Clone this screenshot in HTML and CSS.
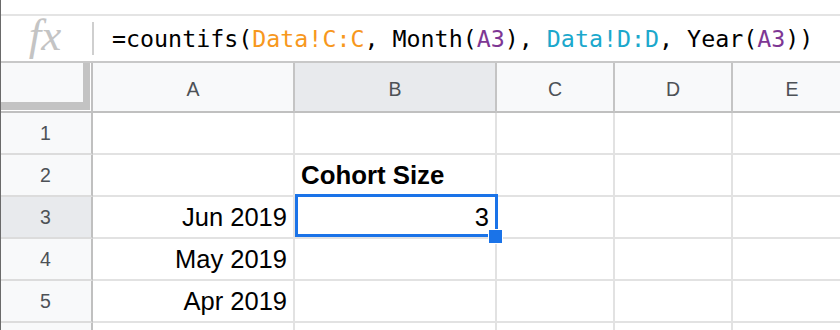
FILE: index.html
```html
<!DOCTYPE html>
<html>
<head>
<meta charset="utf-8">
<link rel="stylesheet" href="styles.css">
</head>
<body>
<div class="app">
  <div class="topgap"></div>
  <div class="formula-bar">
    <div class="fx">fx</div>
    <div class="sep"></div>
    <div class="formula">=countifs(<span class="r1">Data!C:C</span>, Month(<span class="r2">A3</span>), <span class="r3">Data!D:D</span>, Year(<span class="r2">A3</span>))</div>
  </div>
  <div class="grid">
    <div class="corner"></div>
    <div class="colh">A</div>
    <div class="colh sel-h">B</div>
    <div class="colh">C</div>
    <div class="colh">D</div>
    <div class="colh">E</div>

    <div class="rowh">1</div>
    <div class="cell"></div>
    <div class="cell"></div>
    <div class="cell"></div>
    <div class="cell"></div>
    <div class="cell"></div>

    <div class="rowh">2</div>
    <div class="cell"></div>
    <div class="cell bold">Cohort Size</div>
    <div class="cell"></div>
    <div class="cell"></div>
    <div class="cell"></div>

    <div class="rowh sel-h">3</div>
    <div class="cell num">Jun 2019</div>
    <div class="cell num active">3<span class="selbox"></span><span class="handle"></span></div>
    <div class="cell"></div>
    <div class="cell"></div>
    <div class="cell"></div>

    <div class="rowh">4</div>
    <div class="cell num">May 2019</div>
    <div class="cell"></div>
    <div class="cell"></div>
    <div class="cell"></div>
    <div class="cell"></div>

    <div class="rowh">5</div>
    <div class="cell num">Apr 2019</div>
    <div class="cell"></div>
    <div class="cell"></div>
    <div class="cell"></div>
    <div class="cell"></div>

    <div class="rowh"></div>
    <div class="cell"></div>
    <div class="cell"></div>
    <div class="cell"></div>
    <div class="cell"></div>
    <div class="cell"></div>
  </div>
</div>
</body>
</html>
```
FILE: styles.css
```css
html, body {
  margin: 0;
  padding: 0;
  background: #ffffff;
}
.app {
  position: relative;
  width: 840px;
  height: 330px;
  overflow: hidden;
  background: #ffffff;
}
.app::before {
  content: "";
  position: absolute;
  left: 0;
  top: 0;
  bottom: 0;
  width: 1px;
  background: #6a6a6a;
  z-index: 10;
}
.topgap {
  height: 14px;
}
.formula-bar {
  display: flex;
  align-items: center;
  height: 45px;
  border-top: 2px solid #e4e4e4;
  border-bottom: 2px solid #c8c8c8;
  background: #ffffff;
}
.fx {
  width: 92px;
  text-align: center;
  font-family: "Liberation Serif", serif;
  font-style: italic;
  font-size: 45px;
  line-height: 45px;
  color: #c4c4c4;
  padding-right: 2px;
  box-sizing: border-box;
  margin-top: -6px;
}
.sep {
  width: 2px;
  height: 33px;
  background: #cfcfcf;
}
.formula {
  padding-left: 18px;
  font-family: "DejaVu Sans Mono", monospace;
  font-size: 23.3px;
  color: #000000;
  white-space: nowrap;
}
.r1 { color: #f7981d; }
.r2 { color: #7e3794; }
.r3 { color: #1ba8cc; }

.grid {
  display: grid;
  grid-template-columns: 93px 202px 202px 118px 118px 120px;
  grid-template-rows: 50px;
  grid-auto-rows: 42px;
}
.grid > div {
  box-sizing: border-box;
}
.corner {
  background: #f8f9fa;
  border-right: 2px solid #c0c0c0;
  border-bottom: 2px solid #c0c0c0;
  box-shadow: inset -1px -1px 0 #ffffff, inset -8px -9px 0 #c3c3c3;
}
.colh {
  display: flex;
  align-items: center;
  justify-content: center;
  padding-top: 4px;
  background: #f8f9fa;
  border-right: 2px solid #c4c4c4;
  border-bottom: 2px solid #c0c0c0;
  font-family: "Liberation Sans", Arial, sans-serif;
  font-size: 19.5px;
  color: #4d5156;
}
.rowh {
  display: flex;
  align-items: center;
  justify-content: center;
  background: #f8f9fa;
  border-right: 2px solid #c0c0c0;
  border-bottom: 2px solid #dcdcdc;
  font-family: "Liberation Sans", Arial, sans-serif;
  font-size: 19.5px;
  color: #4d5156;
  padding-top: 1px;
}
.sel-h {
  background: #e8eaed;
}
.cell {
  display: flex;
  align-items: center;
  padding: 0 6px;
  border-right: 2px solid #e2e2e2;
  border-bottom: 2px solid #e2e2e2;
  font-family: "Liberation Sans", Arial, sans-serif;
  font-size: 25.5px;
  color: #000000;
  white-space: nowrap;
  background: #ffffff;
}
.cell.num {
  justify-content: flex-end;
}
.cell.bold {
  font-weight: bold;
  font-size: 25.8px;
}
.cell.active {
  position: relative;
  overflow: visible;
}
.selbox {
  position: absolute;
  left: 0;
  top: -3px;
  width: 203px;
  height: 43px;
  box-sizing: border-box;
  border: 3px solid #1a73e8;
}
.handle {
  position: absolute;
  left: 193px;
  top: 32px;
  width: 15px;
  height: 15px;
  box-sizing: border-box;
  background: #1a73e8;
  border: 1px solid #ffffff;
  z-index: 2;
}
```
